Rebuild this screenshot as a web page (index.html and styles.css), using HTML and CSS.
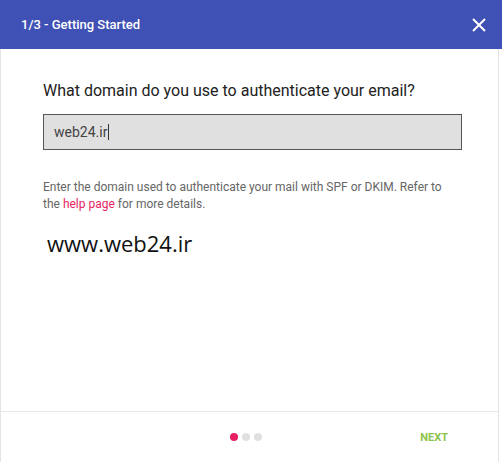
FILE: index.html
```html
<!DOCTYPE html>
<html lang="en">
<head>
  <meta charset="UTF-8">
  <title>Getting Started</title>
  <link rel="stylesheet" href="styles.css">
</head>
<body>
  <div class="dialog">
    <div class="dialog-header">
      <span class="dialog-title">1/3 - Getting Started</span>
      <span class="close-btn">
        <svg width="14" height="14" viewBox="0 0 14 14"><path d="M1 1L13 13M13 1L1 13" stroke="#fff" stroke-width="2"/></svg>
      </span>
    </div>
    <div class="dialog-body">
      <h2 class="question">What domain do you use to authenticate your email?</h2>
      <div class="domain-input">web24.ir<span class="caret"></span></div>
      <p class="hint">Enter the domain used to authenticate your mail with SPF or DKIM. Refer to the <a class="help-link">help page</a> for more details.</p>
      <div class="watermark">www.web24.ir</div>
    </div>
    <div class="dialog-footer">
      <div class="steps">
        <span class="dot active"></span>
        <span class="dot"></span>
        <span class="dot"></span>
      </div>
      <span class="next-btn">NEXT</span>
    </div>
  </div>
</body>
</html>
```
FILE: styles.css
```css
body {
  margin: 0;
  padding: 0;
  font-family: Roboto, "Liberation Sans", sans-serif;
  background: #fff;
}
.dialog {
  width: 502px;
  height: 462px;
  display: flex;
  flex-direction: column;
  box-sizing: border-box;
}
.dialog-header {
  height: 49px;
  background-color: #3f51b5;
  display: flex;
  align-items: center;
  justify-content: space-between;
  padding: 0 16px 0 21px;
}
.dialog-title {
  color: #fff;
  font-size: 13px;
  font-weight: 500;
}
.close-btn {
  display: flex;
}
.dialog-body {
  flex: 1;
  border-left: 1px solid #e4e4e4;
  border-right: 1px solid #e4e4e4;
  margin-right: 3px;
  padding: 31px 36px 0 42px;
}
.question {
  margin: 0;
  font-size: 16px;
  font-weight: 400;
  color: #222;
  line-height: 22px;
}
.domain-input {
  margin-top: 12px;
  height: 34px;
  background-color: #e0e0e0;
  border: 1px solid #555;
  display: flex;
  align-items: center;
  padding-left: 10px;
  font-size: 14px;
  color: #444;
}
.caret {
  display: inline-block;
  width: 1px;
  height: 16px;
  background: #333;
  margin-left: 1px;
}
.hint {
  margin: 29px 0 0;
  max-width: 405px;
  font-size: 12px;
  line-height: 17px;
  color: #666;
}
.help-link {
  color: #e91e63;
}
.watermark {
  margin-top: 15px;
  margin-left: 4px;
  font-family: "Open Sans", sans-serif;
  font-size: 22px;
  color: #111;
}
.dialog-footer {
  height: 50px;
  border-top: 1px solid #e8e8e8;
  border-left: 1px solid #e4e4e4;
  border-right: 1px solid #e4e4e4;
  margin-right: 3px;
  display: flex;
  align-items: center;
}
.steps {
  display: flex;
  gap: 4px;
  margin-left: 229px;
}
.dot {
  width: 8px;
  height: 8px;
  border-radius: 50%;
  background-color: #e0e0e0;
}
.dot.active {
  background-color: #e91e63;
}
.next-btn {
  margin-left: auto;
  margin-right: 50px;
  font-size: 11px;
  font-weight: 700;
  color: #8bc34a;
}
```
